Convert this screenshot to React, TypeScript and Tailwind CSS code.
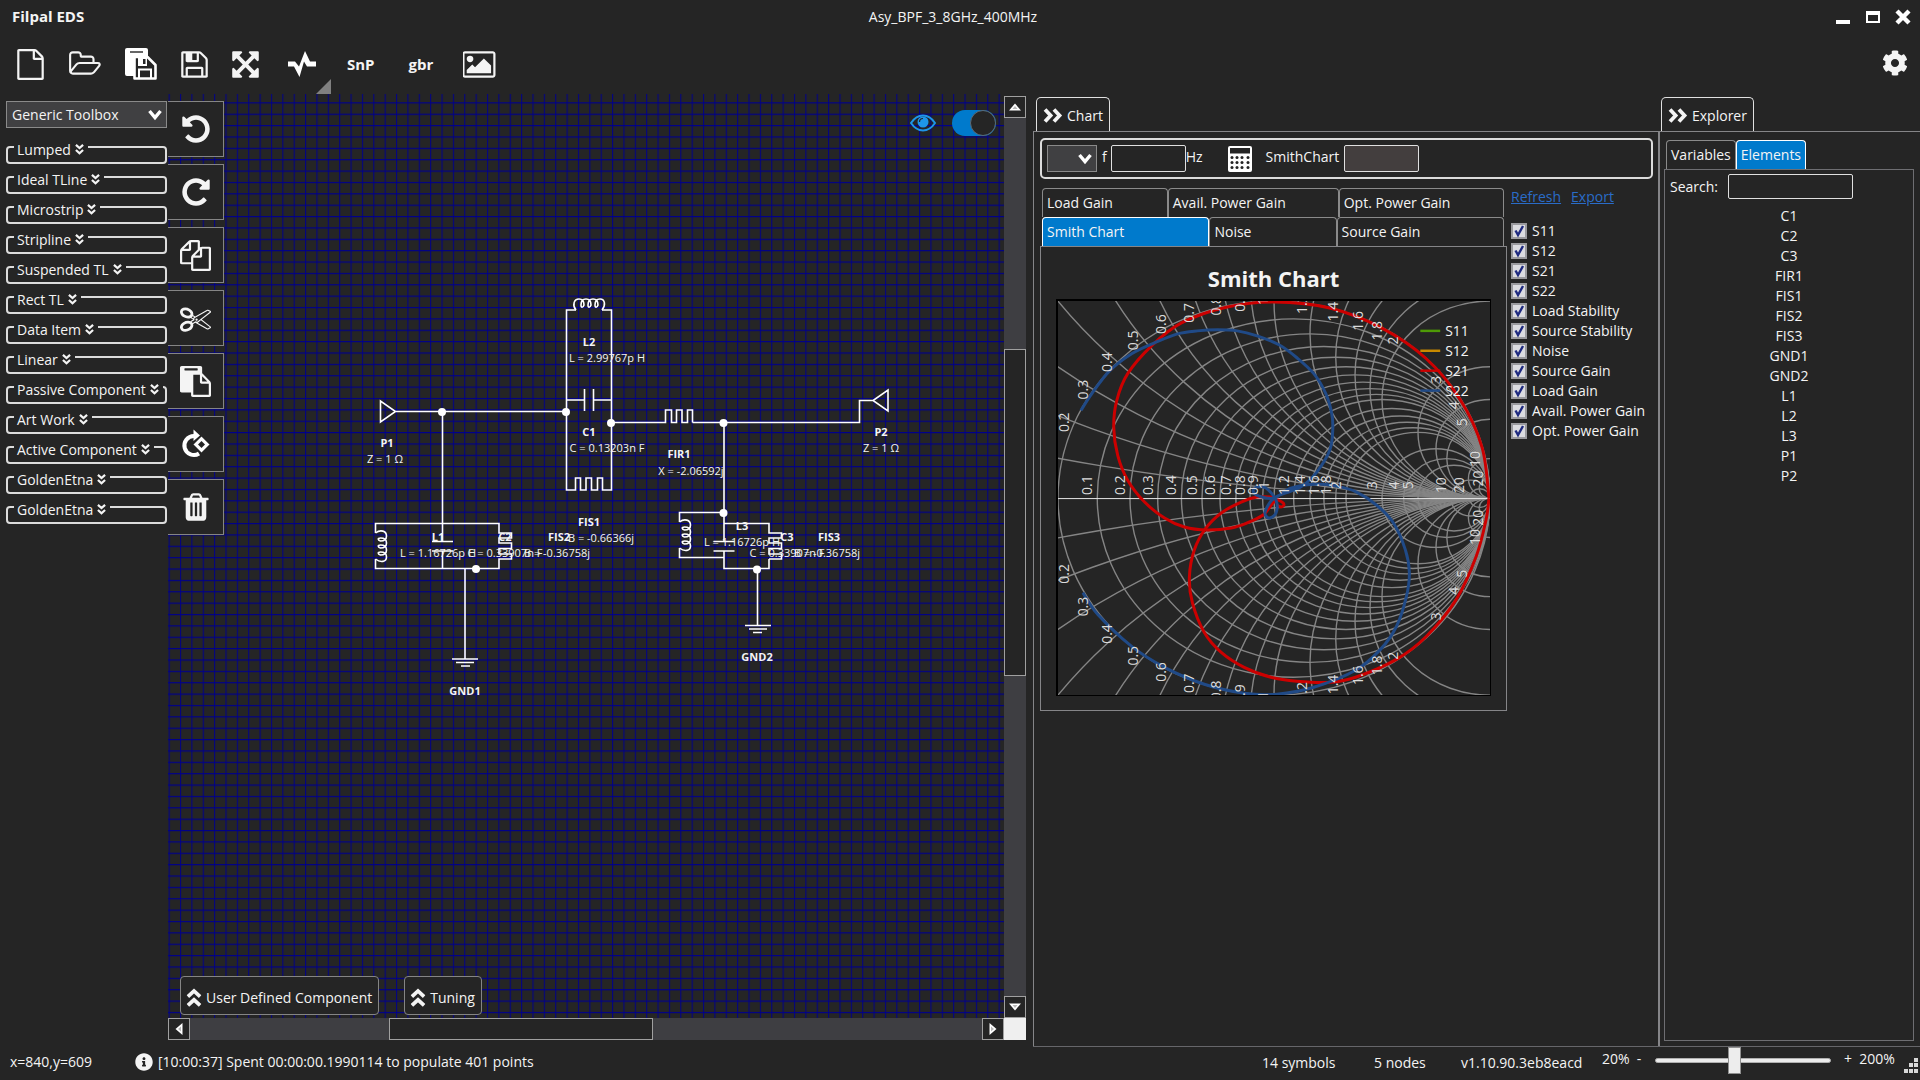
import type { ReactNode } from 'react'
import { FaCog, FaInfoCircle } from 'react-icons/fa'
import { clsx } from 'clsx'

const toolboxGroups = [
  'Lumped',
  'Ideal TLine',
  'Microstrip',
  'Stripline',
  'Suspended TL',
  'Rect TL',
  'Data Item',
  'Linear',
  'Passive Component',
  'Art Work',
  'Active Component',
  'GoldenEtna',
  'GoldenEtna',
]

const traces = [
  'S11',
  'S12',
  'S21',
  'S22',
  'Load Stability',
  'Source Stability',
  'Noise',
  'Source Gain',
  'Load Gain',
  'Avail. Power Gain',
  'Opt. Power Gain',
]

const elements = ['C1', 'C2', 'C3', 'FIR1', 'FIS1', 'FIS2', 'FIS3', 'GND1', 'GND2', 'L1', 'L2', 'L3', 'P1', 'P2']

const paths = {
  file: 'M1596 380q28 28 48 76t20 88v1152q0 40-28 68t-68 28h-1344q-40 0-68-28t-28-68v-1600q0-40 28-68t68-28h896q40 0 88 20t76 48zm-444-244v376h376q-10-29-22-41l-313-313q-12-12-41-22zm384 1528v-1024h-416q-40 0-68-28t-28-68v-416h-768v1536h1280z',
  folder:
    'M1845 931q0-35-53-35h-1088q-40 0-85.5 21.5t-71.5 52.5l-294 363q-18 24-18 40 0 35 53 35h1088q40 0 86-22t71-53l294-363q18-22 18-39zm-1141-163h768v-160q0-40-28-68t-68-28h-576q-40 0-68-28t-28-68v-64q0-40-28-68t-68-28h-320q-40 0-68 28t-28 68v853l256-315q44-53 116-87.5t140-34.5zm1269 163q0 62-46 120l-295 363q-43 53-116 87.5t-140 34.5h-1088q-92 0-158-66t-66-158v-960q0-92 66-158t158-66h320q92 0 158 66t66 158v32h544q92 0 158 66t66 158v160h192q54 0 99 24.5t67 70.5q15 32 15 68z',
  floppy:
    'M512 1536h768v-384h-768v384zm896 0h128v-896q0-14-10-38.5t-20-34.5l-281-281q-10-10-34-20t-39-10v416q0 40-28 68t-68 28h-576q-40 0-68-28t-28-68v-416h-128v1280h128v-416q0-40 28-68t68-28h832q40 0 68 28t28 68v416zm-384-928v-320q0-13-9.5-22.5t-22.5-9.5h-192q-13 0-22.5 9.5t-9.5 22.5v320q0 13 9.5 22.5t22.5 9.5h192q13 0 22.5-9.5t9.5-22.5zm640 32v928q0 40-28 68t-68 28h-1344q-40 0-68-28t-28-68v-1344q0-40 28-68t68-28h928q40 0 88 20t76 48l280 280q28 28 48 76t20 88z',
  arrows:
    'M1411 541l-355 355 355 355 144-144q29-31 70-14 39 17 39 59v448q0 26-19 45t-45 19h-448q-42 0-59-40-17-39 14-69l144-144-355-355-355 355 144 144q31 30 14 69-17 40-59 40h-448q-26 0-45-19t-19-45v-448q0-42 40-59 39-17 69 14l144 144 355-355-355-355-144 144q-19 19-45 19-12 0-24-5-40-17-40-59v-448q0-26 19-45t45-19h448q42 0 59 40 17 39-14 69l-144 144 355 355 355-355-144-144q-31-30-14-69 17-40 59-40h448q26 0 45 19t19 45v448q0 42-39 59-13 5-25 5-26 0-45-19z',
  picture:
    'M576 576q0 80-56 136t-136 56-136-56-56-136 56-136 136-56 136 56 56 136zm1024 384v448h-1408v-192l320-320 160 160 512-512zm96-704h-1600q-13 0-22.5 9.5t-9.5 22.5v1216q0 13 9.5 22.5t22.5 9.5h1600q13 0 22.5-9.5t9.5-22.5v-1216q0-13-9.5-22.5t-22.5-9.5zm160 32v1216q0 66-47 113t-113 47h-1600q-66 0-113-47t-47-113v-1216q0-66 47-113t113-47h1600q66 0 113 47t47 113z',
  undo: 'M1664 896q0 156-61 298t-164 245-245 164-298 61q-172 0-327-72.5t-264-204.5q-7-10-6.5-22.5t8.5-20.5l137-138q10-9 25-9 16 2 23 12 73 95 179 147t225 52q104 0 198.5-40.5t163.5-109.5 109.5-163.5 40.5-198.5-40.5-198.5-109.5-163.5-163.5-109.5-198.5-40.5q-98 0-188 35.5t-160 101.5l137 138q31 30 14 69-17 40-59 40h-448q-26 0-45-19t-19-45v-448q0-42 40-59 39-17 69 14l130 129q107-101 244.5-156.5t284.5-55.5q156 0 298 61t245 164 164 245 61 298z',
  files:
    'M1696 384q40 0 68 28t28 68v1216q0 40-28 68t-68 28h-960q-40 0-68-28t-28-68v-288h-544q-40 0-68-28t-28-68v-672q0-40 20-88t48-76l408-408q28-28 76-48t88-20h416q40 0 68 28t28 68v328q68-40 128-40h416zm-544 213l-299 299h299v-299zm-640-384l-299 299h299v-299zm196 647l316-316v-416h-384v416q0 40-28 68t-68 28h-416v640h512v-256q0-40 20-88t48-76zm956 804v-1152h-384v416q0 40-28 68t-68 28h-416v640h896z',
  scissors:
    'M960 896q26 0 45 19t19 45-19 45-45 19-45-19-19-45 19-45 45-19zm300 64l507 398q28 20 25 56-5 35-35 51l-128 64q-13 7-29 7-17 0-31-8l-690-387-110 66q-8 4-12 5 14 49 10 97-7 77-56 147.5t-132 123.5q-132 84-277 84-136 0-222-78-90-84-79-207 7-76 56-147t131-124q132-84 278-84 83 0 151 31 9-13 22-22l122-73-122-73q-13-9-22-22-68 31-151 31-146 0-278-84-82-53-131-124t-56-147q-5-59 15.5-113t63.5-93q85-79 222-79 145 0 277 84 83 52 132 123t56 148q4 48-10 97 4 1 12 5l110 66 690-387q14-8 31-8 16 0 29 7l128 64q30 16 35 51 3 36-25 56zm-681-260q46-42 21-108t-106-117q-92-59-192-59-74 0-113 36-46 42-21 108t106 117q92 59 192 59 74 0 113-36zm-85 745q81-51 106-117t-21-108q-39-36-113-36-100 0-192 59-81 51-106 117t21 108q39 36 113 36 100 0 192-59zm178-613l96 58v-11q0-36 33-56l14-8-79-44-26 26q-3 3-10 11t-12 12q-2 2-4 3.5t-3 2.5zm224 224l96 32 736-576-128-64-768 431v113l-160 96 9 8q2 2 7 6 4 4 11 12t11 12l26 26zm704 416l128-64-520-408-177 138q-2 3-13 7z',
  clipboard:
    'M768 1664h896v-640h-416q-40 0-68-28t-28-68v-416h-384v1152zm256-1440v-64q0-13-9.5-22.5t-22.5-9.5h-704q-13 0-22.5 9.5t-9.5 22.5v64q0 13 9.5 22.5t22.5 9.5h704q13 0 22.5-9.5t9.5-22.5zm256 672h299l-299-299v299zm512 128v672q0 40-28 68t-68 28h-960q-40 0-68-28t-28-68v-160h-544q-40 0-68-28t-28-68v-1344q0-40 28-68t68-28h1088q40 0 68 28t28 68v328q21 13 36 28l408 408q28 28 48 76t20 88z',
  trash:
    'M704 1376v-704q0-14-9-23t-23-9h-64q-14 0-23 9t-9 23v704q0 14 9 23t23 9h64q14 0 23-9t9-23zm256 0v-704q0-14-9-23t-23-9h-64q-14 0-23 9t-9 23v704q0 14 9 23t23 9h64q14 0 23-9t9-23zm256 0v-704q0-14-9-23t-23-9h-64q-14 0-23 9t-9 23v704q0 14 9 23t23 9h64q14 0 23-9t9-23zm-544-992h448l-48-117q-7-9-17-11h-317q-10 2-17 11zm928 32v64q0 14-9 23t-23 9h-96v948q0 83-47 143.5t-113 60.5h-832q-66 0-113-58.5t-47-141.5v-952h-96q-14 0-23-9t-9-23v-64q0-14 9-23t23-9h309l70-167q15-37 54-63t79-26h320q40 0 79 26t54 63l70 167h309q14 0 23 9t9 23z',
}

interface GlyphProps {
  d: string
  width?: number
  className?: string
}

// Solid glyph on the 1792 unit grid
function Glyph({ d, width = 1792, className = 'h-8 w-8' }: GlyphProps) {
  return (
    <svg viewBox={`0 0 ${width} 1792`} className={className} fill="currentColor" aria-hidden="true">
      <path d={d} />
    </svg>
  )
}

function DoubleChevron({ className }: { className?: string }) {
  return (
    <svg viewBox="0 0 20 16" className={className} fill="none" stroke="currentColor" strokeWidth="4" aria-hidden="true">
      <path d="M1.500 1.500 7.500 8l-6 6.500M11 1.500 17 8l-6 6.500" />
    </svg>
  )
}

function DownChevron() {
  return (
    <svg viewBox="0 0 14 12" className="pointer-events-none absolute top-1/2 right-[5px] h-3 w-3.5 -translate-y-1/2" fill="none" stroke="#fff" strokeWidth="3.4">
      <path d="M1.5 2 7 8.5 12.5 2" />
    </svg>
  )
}

function TitleBar() {
  return (
    <header className="grid h-[33px] shrink-0 grid-cols-[1fr_auto_1fr] items-center pr-[9px] pl-3">
      <h1 className="text-[15px] font-bold">Filpal EDS</h1>
      <span className="mr-[17px] text-sm">Asy_BPF_3_8GHz_400MHz</span>
      <div className="flex justify-end gap-[14px]">
        <button aria-label="Minimize" className="h-4 w-4">
          <svg viewBox="0 0 16 16">
            <path d="M1 11h14v4H1z" fill="#fff" />
          </svg>
        </button>
        <button aria-label="Maximize" className="h-4 w-4">
          <svg viewBox="0 0 16 16">
            <path d="M1 2h14v12H1zM3 6v6h10V6z" fill="#fff" fillRule="evenodd" />
          </svg>
        </button>
        <button aria-label="Close" className="h-4 w-4">
          <svg viewBox="0 0 16 16" stroke="#fff" strokeWidth="4.4">
            <path d="M2 2l12 12M14 2 2 14" />
          </svg>
        </button>
      </div>
    </header>
  )
}

function Toolbar() {
  return (
    <div className="flex h-[61px] shrink-0 items-center pt-px pr-3 pl-[15px]">
      <button aria-label="New" className="mr-[22px]">
        <Glyph d={paths.file} className="h-[31px] w-[31px]" />
      </button>
      <button aria-label="Open" className="mr-[23px]">
        <Glyph d={paths.folder} width={2048} className="h-[30px] w-[34px]" />
      </button>
      <button aria-label="Save As" className="mr-[22px]">
        <svg viewBox="0 0 32 32" className="h-8 w-8">
          <path d="M2 0h19a2 2 0 0 1 2 2v6h-7v20H2a2 2 0 0 1-2-2V2a2 2 0 0 1 2-2z" fill="#fff" />
          <path d="M5 4h13" stroke="#252525" strokeWidth="1.4" />
          <path d="M9.5 9h13l8 8v13.500h-21z" fill="#252525" stroke="#fff" strokeWidth="2.600" strokeLinejoin="round" />
          <path d="M13 9h9v9h-9z" fill="#fff" />
          <path d="M18 11h2.500v5H18z" fill="#252525" />
          <path d="M14 30v-8.500h12V30" fill="none" stroke="#fff" strokeWidth="2" />
        </svg>
      </button>
      <button aria-label="Save" className="mr-[20px]">
        <Glyph d={paths.floppy} className="h-[31px] w-[31px]" />
      </button>
      <button aria-label="Fit to view" className="mr-[27px]">
        <Glyph d={paths.arrows} className="h-[31px] w-[31px]" />
      </button>
      <button aria-label="Simulate" className="relative mr-[31px]">
        <svg viewBox="0 0 28 26" className="h-[26px] w-7">
          <path d="M0 10.500h7l4 5L17 0l5 10.500h6V15.500h-9L16 10.500 11.500 26 6 15.500H0z" fill="#fff" />
        </svg>
        <svg viewBox="0 0 15 15" className="absolute top-[28px] left-[28px] h-[15px] w-[15px]">
          <path d="M15 0v15H0z" fill="#808080" />
        </svg>
      </button>
      <button className="mr-[34px] text-[15px] font-bold">SnP</button>
      <button className="mr-[30px] text-[15px] font-bold">gbr</button>
      <button aria-label="Picture">
        <Glyph d={paths.picture} width={1920} className="h-[31px] w-[34px]" />
      </button>
      <button aria-label="Settings" className="mb-0.5 ml-auto">
        <FaCog className="h-[26px] w-[26px]" />
      </button>
    </div>
  )
}

function Toolbox() {
  return (
    <aside className="flex w-[168px] shrink-0 flex-col pt-[7px] pr-px pl-1.5">
      <div className="relative">
        <select aria-label="Toolbox" className="h-[27px] w-full appearance-none border border-[#8a8a8a] bg-[#404042] pl-[5px] text-sm">
          <option>Generic Toolbox</option>
        </select>
        <DownChevron />
      </div>
      <div className="mt-[9px] flex flex-col gap-[3px]">
        {toolboxGroups.map((name, i) => (
          <fieldset key={i} className="h-[27px] rounded-[4px] border-2 border-[#dcdcdc] pl-[6px]">
            <legend className="h-5 pr-[3px] pl-[3px]">
              <button className="flex h-5 items-center gap-[3px] pt-[5px] text-sm whitespace-nowrap">
                {name}
                <DoubleChevron className="h-[9px] w-[11px] rotate-90" />
              </button>
            </legend>
          </fieldset>
        ))}
      </div>
    </aside>
  )
}

function EditTools() {
  const items: [string, ReactNode][] = [
    ['Undo', <Glyph d={paths.undo} />],
    ['Redo', <Glyph d={paths.undo} className="h-8 w-8 -scale-x-100" />],
    ['Copy', <Glyph d={paths.files} className="h-[31px] w-[31px]" />],
    ['Cut', <Glyph d={paths.scissors} className="h-[31px] w-[31px]" />],
    ['Paste', <Glyph d={paths.clipboard} className="h-[31px] w-[31px]" />],
    [
      'Rotate',
      <svg viewBox="0 0 30 30" className="h-[30px] w-[30px]">
        <path d="M13 7A9.500 9.500 0 1 0 18 24.500" fill="none" stroke="#fff" strokeWidth="4" />
        <path d="M12.500 0.500v11.500l6.500-5.500z" fill="#fff" />
        <path d="M20.500 6.500l9 9-9 9-9-9z" fill="#fff" stroke="#252525" strokeWidth="1.500" />
        <path d="M20.500 12l3.500 3.500-3.500 3.500-3.500-3.500z" fill="#252525" />
      </svg>,
    ],
    ['Delete', <Glyph d={paths.trash} />],
  ]
  return (
    <div className="absolute top-[7px] left-0 flex flex-col gap-[7px]">
      {items.map(([name, icon]) => (
        <button key={name} aria-label={name} className="flex h-14 w-14 items-center justify-center border border-l-0 border-[#858585] bg-[#252525]">
          {icon}
        </button>
      ))}
    </div>
  )
}

// [text, x, y, bold]
const captions: [string, number, number, boolean][] = [
  ['P1', 387, 447, true],
  ['Z = 1 Ω', 385, 463, false],
  ['L2', 589, 346, true],
  ['L = 2.99767p H', 607, 362, false],
  ['C1', 589, 436, true],
  ['C = 0.13203n F', 607, 452, false],
  ['FIR1', 679, 458, true],
  ['X = -2.06592j', 691, 475, false],
  ['FIS1', 589, 526, true],
  ['B = -0.66366j', 601, 542, false],
  ['L1', 438, 541, true],
  ['C2', 505, 541, true],
  ['FIS2', 559, 541, true],
  ['L = 1.16726p H', 438, 557, false],
  ['C = 0.33907n F', 505, 557, false],
  ['B = -0.36758j', 557, 557, false],
  ['L3', 742, 530, true],
  ['L = 1.16726p H', 742, 546, false],
  ['C3', 787, 541, true],
  ['FIS3', 829, 541, true],
  ['C = 0.33907n F', 787, 557, false],
  ['B = -0.36758j', 827, 557, false],
  ['P2', 881, 436, true],
  ['Z = 1 Ω', 881, 452, false],
  ['GND1', 465, 695, true],
  ['GND2', 757, 661, true],
]

const nodes = [
  [442, 412],
  [566, 412],
  [611, 423],
  [723.5, 423],
  [723.5, 513],
  [476, 569],
  [757, 569.5],
]

const coil =
  'c-4-5-2-11 3-11c4 0 5 3 5 6c-1 3-3 3-3 0c0-3 1-6 5-6c4 0 5 3 5 6c-1 3-3 3-3 0c0-3 1-6 5-6c4 0 5 3 5 6c-1 3-3 3-3 0c0-3 1-6 5-6c5 0 6 6 2 11'

function Schematic() {
  return (
    <svg className="absolute inset-0 h-full w-full">
      <defs>
        <pattern id="grid" x="0.600" y="8.300" width="11.370" height="11.370" patternUnits="userSpaceOnUse">
          <path d="M0 0.600H11.400M0.600 0V11.400" stroke="#00008b" strokeWidth="1" />
        </pattern>
      </defs>
      <rect width="100%" height="100%" fill="url(#grid)" />
      <g transform="translate(-168 -94)">
        <g fill="none" stroke="#fff" strokeWidth="1.600">
          {/* ports */}
          <path d="M380.500 401v21l15-10.500zM395.500 411.500H566" />
          <path d="M888 390v21l-15-10.500zM873 400.500H859.500V422.500H692.500" />
          {/* L2, C1 and FIS1 in parallel */}
          <path d="M576 310H566.500V490H575.500V478h5v12h5.500v-12h5.500v12h6v-12h5v12H611.500V310H602" />
          <path d="M566.500 400H584.500M593.500 400H611.500M584.500 389v22M593.500 389v22" />
          <path d={`M576 310${coil}`} />
          {/* FIR1 */}
          <path d="M611.500 422.500H665.500V410h6v12.500h5v-12.500h5.500v12.500h5.500v-12.500h5v12.500" />
          {/* left shunt branch */}
          <path d="M442.500 412V541.500M442.500 551V568.500M432 541.500h21M432 551h21" />
          <path d="M375.500 533V523.500H499V533h12.500v5H499v5h12.500v5.500H499v5.500h12.500v5H499V568.500H375.500V559" />
          <path d={`M375.500 533${coil}`} transform="rotate(90 375.500 533)" />
          <path d="M465 569V659M452 659h26M456 662.500h18M461 666h9" />
          {/* right shunt branch */}
          <path d="M724 423V541.500M724 551V568.500H769V559M713.500 541.500h21M713.500 551h21" />
          <path d="M724 523.500H769V533h12.500v5H769v5h12.500v5.500H769v5.500h12.500v5H769" />
          <path d="M724 512.500H679.500V522M679.500 548V557.500H724" />
          <path d={`M679.500 522${coil}`} transform="rotate(90 679.500 522)" />
          <path d="M757.500 569V625.500M745 625.500h26M749 629h18M753 632.500h9" />
        </g>
        {nodes.map(([x, y]) => (
          <circle key={`${x}-${y}`} cx={x} cy={y} r="4" fill="#fff" />
        ))}
        <g fill="#f4f4f4" fontSize="11" textAnchor="middle">
          {captions.map(([text, x, y, bold], i) => (
            <text key={i} x={x} y={y} fontWeight={bold ? 700 : 400}>
              {text}
            </text>
          ))}
        </g>
      </g>
    </svg>
  )
}

function Arrow({ className }: { className?: string }) {
  return (
    <svg viewBox="0 0 12 12" className={clsx('h-3 w-3', className)}>
      <path d="M0 9.500 6 2.500l6 7z" fill="#fff" />
      <path d="M3.500 8 6 5l2.500 3z" fill="#b8b8b8" />
    </svg>
  )
}

function ScrollButton({ label, turn }: { label: string; turn?: string }) {
  return (
    <button aria-label={label} className="flex h-[22px] w-[22px] shrink-0 items-center justify-center border border-[#a0a0a0] bg-[#252525]">
      <Arrow className={turn} />
    </button>
  )
}

function Canvas() {
  return (
    <main className="grid min-w-0 flex-1 grid-cols-[1fr_22px] grid-rows-[1fr_22px]">
      <div className="relative overflow-hidden">
        <Schematic />
        <EditTools />
        <div className="absolute top-4 right-2 flex items-center gap-4">
          <svg viewBox="0 0 26 18" className="h-[18px] w-[26px]" fill="none" stroke="#1e96e8" strokeWidth="2">
            <path d="M1 9Q6 1.500 13 1.500T25 9Q20 16.500 13 16.500T1 9z" />
            <circle cx="13" cy="8" r="5.500" fill="#1e96e8" stroke="none" />
            <path d="M9.500 8A3.500 3.500 0 0 1 13 4.500" stroke="#252525" strokeWidth="1.200" />
          </svg>
          <button role="switch" aria-checked="true" aria-label="Show labels" className="flex h-[26px] w-11 justify-end rounded-full bg-[#007acc]">
            <span className="h-[26px] w-[26px] rounded-full border border-[#5a6a78] bg-[#252525]" />
          </button>
        </div>
        <div className="absolute bottom-[3px] left-3 flex gap-[25px]">
          {['User Defined Component', 'Tuning'].map((name) => (
            <button key={name} className="flex h-[39px] items-center gap-[5px] rounded-[4px] border border-[#858585] bg-[#252525] px-1.5 pt-1 text-sm">
              <DoubleChevron className="-mx-[3px] h-[15px] w-5 -rotate-90" />
              {name}
            </button>
          ))}
        </div>
      </div>
      <div className="mt-0.5 flex flex-col bg-[#3e3e42]">
        <ScrollButton label="Scroll up" />
        <div className="flex-[232] bg-[#3e3e42]" />
        <div className="flex-[325] border border-[#a0a0a0] bg-[#252525]" />
        <div className="flex-[321] bg-[#3e3e42]" />
        <ScrollButton label="Scroll down" turn="rotate-180" />
      </div>
      <div className="flex bg-[#3e3e42]">
        <ScrollButton label="Scroll left" turn="-rotate-90" />
        <div className="flex-[199]" />
        <div className="flex-[263] border border-[#a0a0a0] bg-[#252525]" />
        <div className="flex-[330]" />
        <ScrollButton label="Scroll right" turn="rotate-90" />
      </div>
      <div className="bg-[#efefef]" />
    </main>
  )
}

type Point = [number, number]

const gridValues = [0.1, 0.2, 0.3, 0.4, 0.5, 0.6, 0.7, 0.8, 0.9, 1, 1.2, 1.4, 1.6, 1.8, 2, 3, 4, 5, 10, 20]

const s21: Point[][] = [
  [
    [433, 198], [426, 147], [404, 99], [370, 58], [325, 27], [273, 7], [217, 1], [170, 6], [124, 22], [94, 45], [70, 73],
    [59, 100], [56, 127], [60, 155], [70, 180], [87, 202], [107, 218], [127, 227], [150, 230], [174, 228], [190, 223],
    [206, 215], [212, 208], [219, 200], [225, 202], [227, 205], [224, 207], [220, 205],
  ],
  [
    [217, 197], [200, 197], [184, 202], [164, 213], [148, 229], [137, 250], [132, 277], [135, 303], [147, 333], [164, 353],
    [187, 368], [214, 378], [240, 382], [274, 383], [299, 378], [340, 360], [370, 337], [400, 300], [420, 257], [430, 220],
    [433, 198],
  ],
]

const s22: Point[][] = [
  [
    [23, 110], [34, 93], [52, 70], [74, 53], [97, 42], [120, 33], [140, 30], [160, 29], [180, 30], [200, 35], [222, 44],
    [240, 57], [257, 73], [269, 93], [275, 113], [276, 130], [273, 150], [260, 172], [247, 185], [234, 191], [217, 198],
    [208, 212], [212, 218], [219, 213], [219, 200], [209, 188], [200, 187], [196, 191], [202, 196], [217, 198], [234, 188],
    [257, 184], [280, 186], [300, 192], [320, 205], [337, 223], [349, 250], [353, 273], [350, 297], [340, 327], [324, 350],
    [299, 371], [257, 388], [220, 395], [187, 394], [147, 385], [107, 368], [74, 347], [40, 315], [25, 293],
  ],
]

// Catmull-Rom spline through the points, as cubic beziers
function smooth(points: Point[]) {
  let d = `M${points[0][0]} ${points[0][1]}`
  for (let i = 0; i < points.length - 1; i++) {
    const p0 = points[Math.max(i - 1, 0)]
    const p1 = points[i]
    const p2 = points[i + 1]
    const p3 = points[Math.min(i + 2, points.length - 1)]
    d += `C${p1[0] + (p2[0] - p0[0]) / 6} ${p1[1] + (p2[1] - p0[1]) / 6} ${p2[0] - (p3[0] - p1[0]) / 6} ${p2[1] - (p3[1] - p1[1]) / 6} ${p2[0]} ${p2[1]}`
  }
  return d
}

function SmithChart() {
  const cx = 217
  const cy = 198
  const rx = 217
  const ry = 198
  const legend = [
    ['S11', '#4e9a06'],
    ['S12', '#c88a00'],
    ['S21', '#cc0000'],
    ['S22', '#204a87'],
  ]
  return (
    <svg viewBox="0 0 434 396" className="w-full border-2 border-r border-b border-black">
      <g fill="none" stroke="#858585" strokeWidth="1.400">
        <ellipse cx={cx} cy={cy} rx={rx} ry={ry} />
        {gridValues.map((v) => (
          <g key={v}>
            <ellipse cx={cx + (rx * v) / (1 + v)} cy={cy} rx={rx / (1 + v)} ry={ry / (1 + v)} />
            <ellipse cx={cx + rx} cy={cy - ry / v} rx={rx / v} ry={ry / v} />
            <ellipse cx={cx + rx} cy={cy + ry / v} rx={rx / v} ry={ry / v} />
          </g>
        ))}
      </g>
      <path d={`M0 ${cy}.5H434`} stroke="#e8e8e8" />
      <g fill="none" strokeWidth="3">
        {s21.map((p, i) => (
          <path key={i} d={smooth(p)} stroke="#cc0000" />
        ))}
        {s22.map((p, i) => (
          <path key={i} d={smooth(p)} stroke="#204a87" />
        ))}
      </g>
      <g fill="#dcdcdc" fontSize="14" textAnchor="middle">
        {gridValues.map((v) => {
          const angle = Math.PI - 2 * Math.atan(v)
          const axisX = cx + (rx * (v - 1)) / (v + 1) - 5
          const rimX = cx + rx * Math.cos(angle) - 6
          const rimY = ry * Math.sin(angle)
          return (
            <g key={v}>
              <text transform={`translate(${axisX} ${cy - 13}) rotate(-90)`}>{v}</text>
              <text transform={`translate(${rimX} ${cy - rimY}) rotate(-90)`}>{v}</text>
              <text transform={`translate(${rimX} ${cy + rimY}) rotate(-90)`}>{v}</text>
            </g>
          )
        })}
      </g>
      {legend.map(([name, color], i) => (
        <g key={name}>
          <path d={`M364 ${30 + i * 20}h20`} stroke={color} strokeWidth="2.500" />
          <text x="389" y={35 + i * 20} fontSize="14" fill="#f4f4f4">
            {name}
          </text>
        </g>
      ))}
    </svg>
  )
}

function Tab({ children, active, className }: { children: ReactNode; active?: boolean; className?: string }) {
  return (
    <button
      role="tab"
      aria-selected={!!active}
      className={clsx(
        'h-[29px] rounded-t-[4px] border border-b-0 px-1 text-left whitespace-nowrap',
        active ? 'border-white bg-[#007acc]' : 'border-[#8a8a8a]',
        className
      )}
    >
      {children}
    </button>
  )
}

function PanelTab({ children }: { children: ReactNode }) {
  return (
    <button className="ml-[3px] flex h-[34px] items-center gap-1 self-start rounded-t-[5px] border border-b-0 border-[#e0e0e0] px-[6px] pt-0.5 text-sm">
      <DoubleChevron className="h-[15px] w-5" />
      {children}
    </button>
  )
}

function TraceCheckbox({ label }: { label: string }) {
  return (
    <label className="flex h-5 items-center gap-[5px] whitespace-nowrap">
      <span className="grid">
        <input type="checkbox" defaultChecked className="peer h-4 w-4 appearance-none border-2 border-[#9a9a9e] bg-[#dcdce0] [grid-area:1/1]" />
        <svg viewBox="0 0 16 16" className="pointer-events-none hidden h-4 w-4 [grid-area:1/1] peer-checked:block" fill="none" stroke="#1f2a80" strokeWidth="2.400">
          <path d="M4.500 7.500 7 12l5-9" />
        </svg>
      </span>
      {label}
    </label>
  )
}

function ChartPanel() {
  return (
    <section className="flex w-[625px] shrink-0 flex-col pt-[3px]">
      <PanelTab>Chart</PanelTab>
      <div className="flex-1 border-t border-l border-[#858588] pt-1.5 pr-[5px] pl-1.5 text-sm">
        <div className="flex h-[41px] items-center rounded-[5px] border-2 border-[#dcdcdc] pl-[5px]">
          <div className="relative w-[50px]">
            <select aria-label="Chart" className="h-[27px] w-full appearance-none border border-[#8a8a8a] bg-[#404042]" />
            <DownChevron />
          </div>
          <label htmlFor="freq" className="mr-1 ml-[5px] pb-1">
            f
          </label>
          <input id="freq" className="h-[27px] w-[75px] rounded-[2px] border border-[#e0e0e0] bg-transparent px-1" />
          <span className="pb-1">Hz</span>
          <button aria-label="Calculate" className="mr-3.5 ml-[25px]">
            <svg viewBox="0 0 24 26" className="h-[26px] w-6">
              <path d="M2 0h20a2 2 0 0 1 2 2v22a2 2 0 0 1-2 2H2a2 2 0 0 1-2-2V2a2 2 0 0 1 2-2z" fill="#fff" />
              <path d="M2 2h20v5.500H2z" fill="#252525" />
              {[11, 16, 21].map((y) =>
                [4, 9, 14, 20].map((x) => <circle key={`${x}-${y}`} cx={x} cy={y + 0.500} r="1.500" fill="#252525" />)
              )}
            </svg>
          </button>
          <label htmlFor="smith-value" className="mr-[5px] pb-1">
            SmithChart
          </label>
          <input id="smith-value" className="h-[27px] w-[75px] rounded-[2px] border border-[#e0e0e0] bg-[#433e3e] px-1" />
        </div>
        <div className="mt-[9px] flex">
          <div className="w-[467px]">
            <div role="tablist" className="pr-[3px] pl-0.5">
              <div className="flex">
                <Tab className="flex-[123]">Load Gain</Tab>
                <Tab className="flex-[171]">Avail. Power Gain</Tab>
                <Tab className="flex-[165]">Opt. Power Gain</Tab>
              </div>
              <div className="flex">
                <Tab active className="flex-[168]">
                  Smith Chart
                </Tab>
                <Tab className="flex-[125]">Noise</Tab>
                <Tab className="flex-[168]">Source Gain</Tab>
              </div>
            </div>
            <div className="border border-[#858588] px-[15px] pb-[14px]">
              <h2 className="py-[15px] text-center text-[22px] leading-[33px] font-bold">Smith Chart</h2>
              <div className="-mt-[11px]">
                <SmithChart />
              </div>
            </div>
          </div>
          <div className="pl-1">
            <div className="flex gap-[10px] leading-[18px]">
              <a href="#refresh" className="text-[#2a6cc8] underline">
                Refresh
              </a>
              <a href="#export" className="text-[#2a6cc8] underline">
                Export
              </a>
            </div>
            <div className="mt-[15px]">
              {traces.map((t) => (
                <TraceCheckbox key={t} label={t} />
              ))}
            </div>
          </div>
        </div>
      </div>
    </section>
  )
}

function ExplorerPanel() {
  return (
    <section className="flex w-[262px] shrink-0 flex-col pt-[3px]">
      <PanelTab>Explorer</PanelTab>
      <div className="flex flex-1 flex-col border-t border-l-2 border-[#858588] pt-2 pr-1.5 pb-[5px] pl-1 text-sm">
        <div role="tablist" className="flex pl-0.5">
          <Tab>Variables</Tab>
          <Tab active>Elements</Tab>
        </div>
        <div className="flex-1 border border-[#6e6e72] pt-1">
          <div className="flex items-center pl-[5px]">
            <label htmlFor="search" className="w-[58px]">
              Search:
            </label>
            <input id="search" className="h-[25px] w-[125px] rounded-[2px] border border-[#e0e0e0] bg-transparent px-1" />
          </div>
          <ul className="mt-[7px] text-center leading-5">
            {elements.map((e) => (
              <li key={e}>{e}</li>
            ))}
          </ul>
        </div>
      </div>
    </section>
  )
}

function StatusBar() {
  return (
    <footer className="flex h-[34px] shrink-0 text-sm">
      <div className="flex flex-1 items-center pb-0.5 pl-[10px]">
        <output className="w-[125px]">x=840,y=609</output>
        <FaInfoCircle className="mr-[5px] h-[18px] w-[18px]" />
        <p>[10:00:37] Spent 00:00:00.1990114 to populate 401 points</p>
      </div>
      <div className="flex w-[887px] items-center border-t border-[#66666a] pb-0.5">
        <span className="ml-[229px] w-28">14 symbols</span>
        <span className="w-[87px]">5 nodes</span>
        <span className="w-[141px]">v1.10.90.3eb8eacd</span>
        <label htmlFor="zoom" className="mb-2 w-[53px] whitespace-pre">
          20%  -
        </label>
        <input
          id="zoom"
          type="range"
          min="20"
          max="200"
          defaultValue="100"
          className="mb-1 h-7 w-[176px] appearance-none bg-transparent [&::-webkit-slider-runnable-track]:h-[5px] [&::-webkit-slider-runnable-track]:rounded-sm [&::-webkit-slider-runnable-track]:border [&::-webkit-slider-runnable-track]:border-[#b0b0b0] [&::-webkit-slider-runnable-track]:bg-[#ececec] [&::-webkit-slider-thumb]:-mt-3 [&::-webkit-slider-thumb]:h-[27px] [&::-webkit-slider-thumb]:w-[13px] [&::-webkit-slider-thumb]:appearance-none [&::-webkit-slider-thumb]:border [&::-webkit-slider-thumb]:border-[#909090] [&::-webkit-slider-thumb]:bg-[#ededed]"
        />
        <span className="mb-2 ml-[13px] whitespace-pre">+  200%</span>
        <svg viewBox="0 0 15 17" className="mt-1.5 mr-0.5 ml-auto h-[17px] w-[15px]" fill="#d8d8d8">
          <path d="M11 1h4v4h-4zM6 6h4v4H6zM11 6h4v4h-4zM1 12h4v4H1zM6 12h4v4H6zM11 12h4v4h-4z" />
        </svg>
      </div>
    </footer>
  )
}

export default function App() {
  return (
    <div className="flex h-screen flex-col overflow-hidden bg-[#252525] font-['Open_Sans','Noto_Sans',sans-serif] text-[#f4f4f4]">
      <TitleBar />
      <Toolbar />
      <div className="flex min-h-0 flex-1">
        <Toolbox />
        <div className="mb-1.5 flex min-w-0 flex-1 pr-[7px]">
          <Canvas />
        </div>
        <ChartPanel />
        <ExplorerPanel />
      </div>
      <StatusBar />
    </div>
  )
}
